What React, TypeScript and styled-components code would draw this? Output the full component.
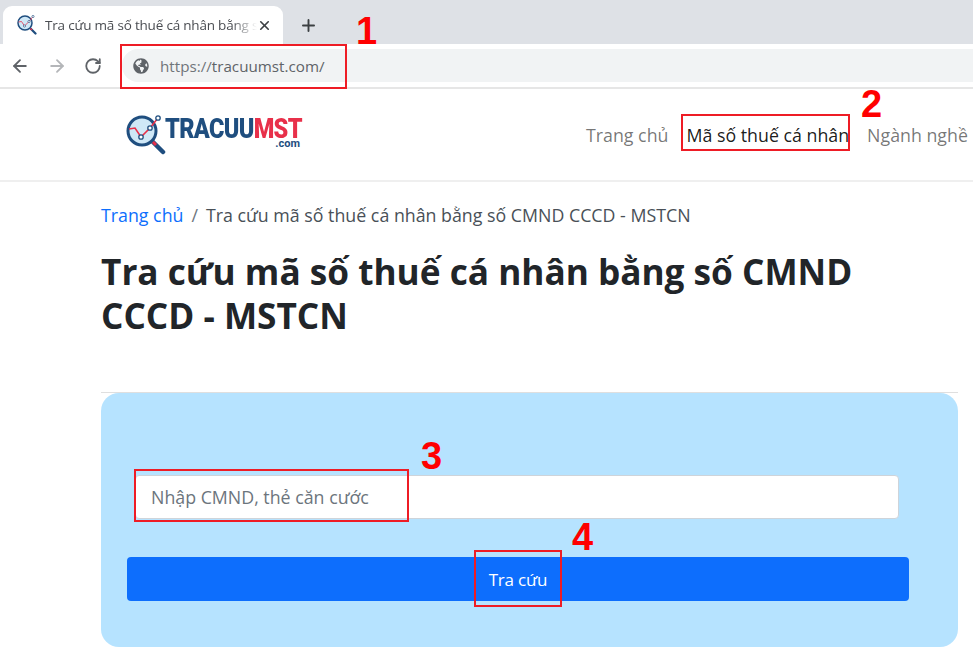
import React from 'react'
import styled, { createGlobalStyle } from 'styled-components'
import { ArrowLeft, ArrowRight, Plus, RotateCw, X } from 'lucide-react'
import { FaGlobeAmericas } from 'react-icons/fa'

const GlobalStyle = createGlobalStyle`
  html, body {
    margin: 0;
    padding: 0;
    background: #fff;
    overflow: hidden;
  }
  * { box-sizing: border-box; }
`

const Page = styled.div`
  position: relative;
  width: 973px;
  height: 666px;
  overflow: hidden;
  font-family: "Open Sans", "Noto Sans", sans-serif;
  color: #212529;
`

const TabStrip = styled.div`
  height: 44px;
  padding: 6px 0 0 3px;
  background: #dee1e6;
  display: flex;
  align-items: stretch;
`

const Tab = styled.div`
  width: 280px;
  background: #fff;
  border-radius: 9px 9px 0 0;
  display: flex;
  align-items: center;
  padding: 0 11px 0 14px;
  font-size: 13.5px;
  letter-spacing: -0.2px;
  color: #4a4d52;
`

const TabTitle = styled.span`
  flex: 1;
  margin-left: 8px;
  white-space: nowrap;
  overflow: hidden;
  -webkit-mask-image: linear-gradient(to right, #000 88%, transparent);
`

const NewTab = styled.div`
  width: 50px;
  display: flex;
  align-items: center;
  justify-content: center;
  color: #3c4043;
`

const Toolbar = styled.div`
  height: 45px;
  display: flex;
  align-items: center;
  background: #fff;
  border-bottom: 2px solid #e6e6e6;
  padding: 0 0 0 10px;
`

const NavIcon = styled.div<{ $dim?: boolean }>`
  width: 37px;
  display: flex;
  align-items: center;
  color: ${(props) => (props.$dim ? '#b4b6b9' : '#5f6368')};
`

const Omnibox = styled.div`
  flex: 1;
  height: 33px;
  margin-left: 1px;
  background: #f1f3f4;
  border-radius: 16px 0 0 16px;
  display: flex;
  align-items: center;
  gap: 11px;
  padding-left: 11px;
  color: #5f6368;
  font-size: 15.2px;
`

const UrlScheme = styled.span`
  color: #70757a;
`

const SiteHeader = styled.header`
  height: 93px;
  display: flex;
  align-items: center;
  justify-content: space-between;
  border-bottom: 2px solid #efefef;
  padding: 0 0 0 126px;
`

const Logo = styled.div`
  display: flex;
  align-items: center;
`

const LogoWords = styled.div`
  width: 137px;
  display: flex;
  flex-direction: column;
  align-items: flex-end;
  margin: -3px 0 0 -1px;
`

const LogoName = styled.div`
  align-self: flex-start;
  font-family: "Roboto", "Liberation Sans", sans-serif;
  font-size: 28px;
  line-height: 22px;
  font-weight: 900;
  letter-spacing: -0.8px;
  transform: scaleX(0.84);
  transform-origin: left center;
  white-space: nowrap;
  color: #1f4e7f;
`

const LogoAccent = styled.span`
  color: #e8304a;
`

const LogoSuffix = styled.div`
  font-family: "Roboto", "Liberation Sans", sans-serif;
  font-size: 11px;
  line-height: 8px;
  font-weight: 700;
  color: #1f4e7f;
  margin-right: 2px;
`

const Nav = styled.nav`
  display: flex;
  align-items: center;
  white-space: nowrap;
  width: 387px;
  flex: none;
`

const NavLink = styled.a<{ $active?: boolean }>`
  font-size: 17.8px;
  padding-right: 18px;
  color: ${(props) => (props.$active ? 'rgba(0,0,0,.9)' : 'rgba(0,0,0,.55)')};
`

const Content = styled.main`
  padding: 0 15px 0 101px;
`

const Breadcrumb = styled.div`
  display: flex;
  align-items: center;
  height: 24px;
  margin-top: 21px;
  font-size: 17.8px;
  color: #495057;
  white-space: nowrap;
`

const CrumbLink = styled.a`
  color: #0d6efd;
`

const CrumbDivider = styled.span`
  margin: 0 8px;
  color: #6c757d;
`

const Title = styled.h1`
  margin: 22px 0 0;
  width: 800px;
  font-size: 35.2px;
  line-height: 44px;
  font-weight: 700;
  color: #212529;
`

const Divider = styled.hr`
  margin: 55px 0 0;
  border: 0;
  height: 1px;
  background: #dfdfdf;
`

const SearchCard = styled.section`
  height: 254px;
  background: #b6e3ff;
  border-radius: 18px;
  padding-top: 82px;
`

const SearchInput = styled.input`
  display: block;
  width: 764px;
  height: 44px;
  margin-left: 34px;
  padding: 0 15px;
  font-family: inherit;
  font-size: 17.8px;
  color: #212529;
  background: #fff;
  border: 1px solid #ced4da;
  border-radius: 4px;
  &::placeholder {
    color: #6c757d;
    opacity: 1;
  }
`

const SearchButton = styled.button`
  display: block;
  width: 782px;
  height: 44px;
  margin: 38px 0 0 26px;
  font-family: inherit;
  font-size: 17px;
  letter-spacing: -0.2px;
  color: #fff;
  background: #0d6efd;
  border: 0;
  border-radius: 4px;
`

// the red callouts drawn over the screenshot
const Callout = styled.div<{ $x: number; $y: number; $w: number; $h: number }>`
  position: absolute;
  left: ${(props) => props.$x}px;
  top: ${(props) => props.$y}px;
  width: ${(props) => props.$w}px;
  height: ${(props) => props.$h}px;
  border: 2px solid #ee1c25;
`

const CalloutNumber = styled.div<{ $x: number; $y: number }>`
  position: absolute;
  left: ${(props) => props.$x}px;
  top: ${(props) => props.$y}px;
  font-family: "Liberation Sans", Arial, sans-serif;
  font-size: 38px;
  line-height: 38px;
  font-weight: 700;
  color: #ff0000;
`

const LogoMark = ({ size }: { size: number }) => (
  <svg width={size} height={size} viewBox="0 0 40 40" fill="none">
    <line x1="27" y1="27" x2="37" y2="37" stroke="#1f4e7f" strokeWidth="4.5" strokeLinecap="round" />
    <line x1="26" y1="26" x2="30" y2="30" stroke="#e8304a" strokeWidth="3" />
    <circle cx="16" cy="16" r="14" fill="#cfe8f7" stroke="#1f4e7f" strokeWidth="3" />
    <polyline points="3,14 9,13 15,22 24,13 32,3" stroke="#e8304a" strokeWidth="1.6" />
    <circle cx="15" cy="22" r="2.2" fill="#fff" stroke="#1f4e7f" strokeWidth="1.3" />
    <circle cx="24" cy="13" r="2.2" fill="#fff" stroke="#1f4e7f" strokeWidth="1.3" />
    <circle cx="32" cy="3" r="2.2" fill="#fff" stroke="#1f4e7f" strokeWidth="1.3" />
  </svg>
)

export default function App() {
  return (
    <Page>
      <GlobalStyle />
      <TabStrip>
        <Tab>
          <LogoMark size={20} />
          <TabTitle>Tra cứu mã số thuế cá nhân bằng số CMND</TabTitle>
          <X size={15} strokeWidth={2.6} color="#3c4043" />
        </Tab>
        <NewTab>
          <Plus size={19} strokeWidth={2.4} />
        </NewTab>
      </TabStrip>
      <Toolbar>
        <NavIcon>
          <ArrowLeft size={20} strokeWidth={2.2} />
        </NavIcon>
        <NavIcon $dim>
          <ArrowRight size={20} strokeWidth={2.2} />
        </NavIcon>
        <NavIcon>
          <RotateCw size={18} strokeWidth={2.4} />
        </NavIcon>
        <Omnibox>
          <FaGlobeAmericas size={16} />
          <span>
            <UrlScheme>https://</UrlScheme>tracuumst.com/
          </span>
        </Omnibox>
      </Toolbar>
      <SiteHeader>
        <Logo>
          <LogoMark size={40} />
          <LogoWords>
            <LogoName>
              TRACUU<LogoAccent>MST</LogoAccent>
            </LogoName>
            <LogoSuffix>.com</LogoSuffix>
          </LogoWords>
        </Logo>
        <Nav>
          <NavLink>Trang chủ</NavLink>
          <NavLink $active>Mã số thuế cá nhân</NavLink>
          <NavLink>Ngành nghề</NavLink>
        </Nav>
      </SiteHeader>
      <Content>
        <Breadcrumb>
          <CrumbLink>Trang chủ</CrumbLink>
          <CrumbDivider>/</CrumbDivider>
          Tra cứu mã số thuế cá nhân bằng số CMND CCCD - MSTCN
        </Breadcrumb>
        <Title>Tra cứu mã số thuế cá nhân bằng số CMND CCCD - MSTCN</Title>
        <Divider />
        <SearchCard>
          <SearchInput placeholder="Nhập CMND, thẻ căn cước" />
          <SearchButton>Tra cứu</SearchButton>
        </SearchCard>
      </Content>

      <Callout $x={120} $y={44} $w={227} $h={45} />
      <Callout $x={681} $y={114} $w={169} $h={37} />
      <Callout $x={134} $y={469} $w={275} $h={53} />
      <Callout $x={474} $y={550} $w={88} $h={57} />
      <CalloutNumber $x={356} $y={12}>1</CalloutNumber>
      <CalloutNumber $x={861} $y={85}>2</CalloutNumber>
      <CalloutNumber $x={421} $y={437}>3</CalloutNumber>
      <CalloutNumber $x={572} $y={518}>4</CalloutNumber>
    </Page>
  )
}
